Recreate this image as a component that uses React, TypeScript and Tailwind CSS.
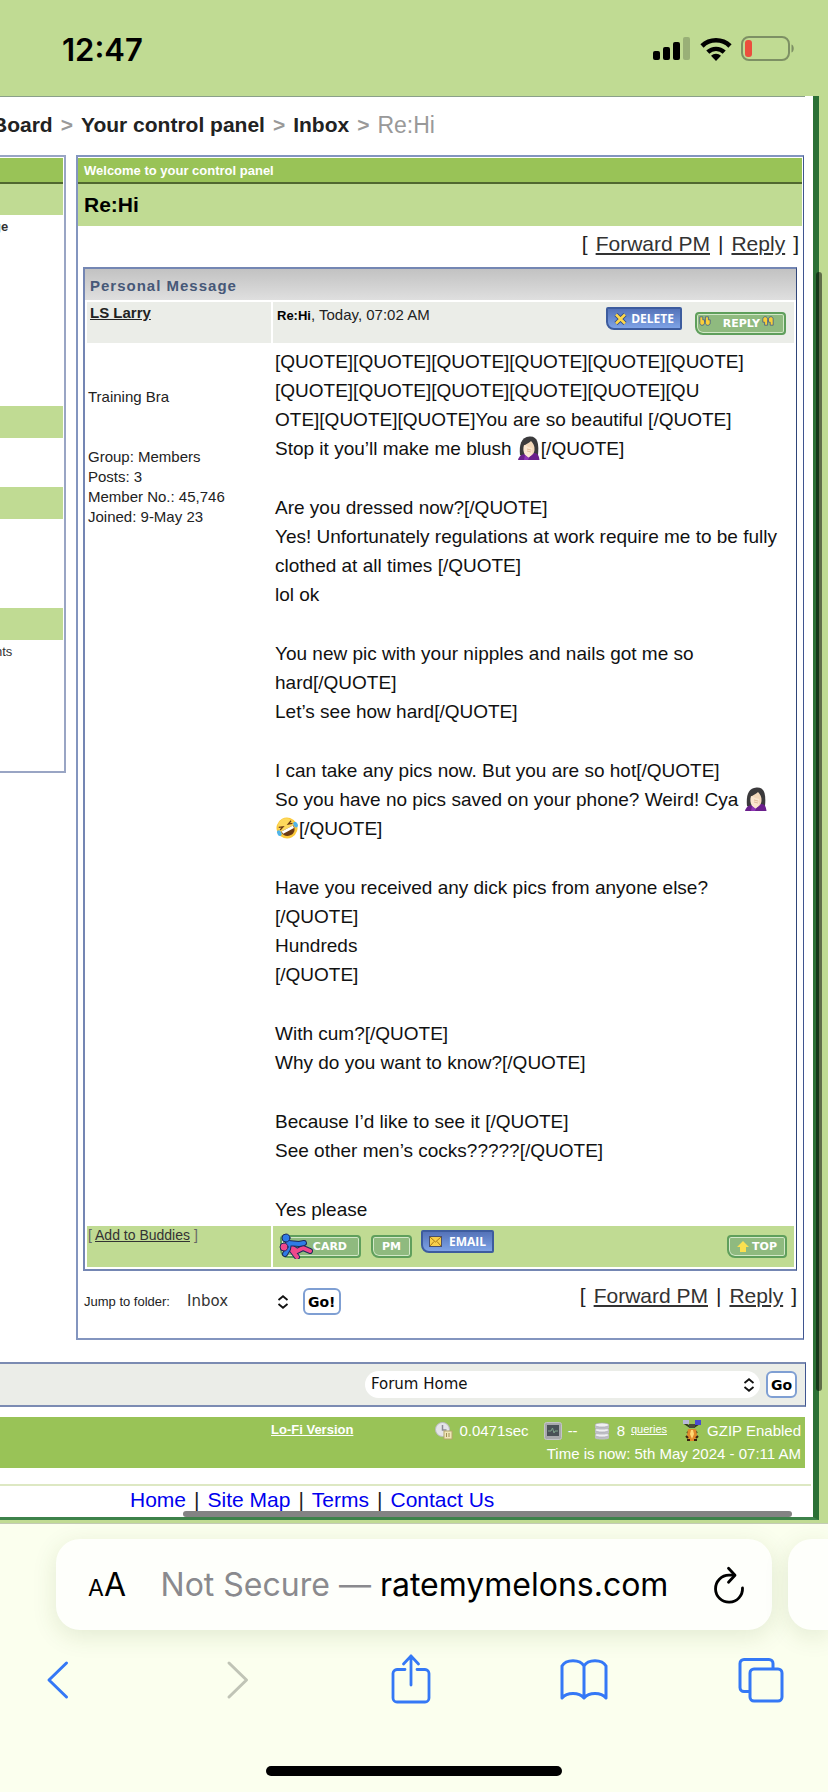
import type { ReactNode } from "react";
import clsx from "clsx";

type Part = string | { emoji: "facepalm" | "rofl" };

const FACEPALM: Part = { emoji: "facepalm" };
const ROFL: Part = { emoji: "rofl" };

const MESSAGE: Part[][][] = [
  [
    ["[QUOTE][QUOTE][QUOTE][QUOTE][QUOTE][QUOTE]"],
    ["[QUOTE][QUOTE][QUOTE][QUOTE][QUOTE][QU"],
    ["OTE][QUOTE][QUOTE]You are so beautiful [/QUOTE]"],
    ["Stop it you’ll make me blush ", FACEPALM, "[/QUOTE]"],
  ],
  [
    ["Are you dressed now?[/QUOTE]"],
    ["Yes! Unfortunately regulations at work require me to be fully"],
    ["clothed at all times [/QUOTE]"],
    ["lol ok"],
  ],
  [
    ["You new pic with your nipples and nails got me so"],
    ["hard[/QUOTE]"],
    ["Let’s see how hard[/QUOTE]"],
  ],
  [
    ["I can take any pics now. But you are so hot[/QUOTE]"],
    ["So you have no pics saved on your phone? Weird! Cya ", FACEPALM],
    [ROFL, "[/QUOTE]"],
  ],
  [
    ["Have you received any dick pics from anyone else?"],
    ["[/QUOTE]"],
    ["Hundreds"],
    ["[/QUOTE]"],
  ],
  [["With cum?[/QUOTE]"], ["Why do you want to know?[/QUOTE]"]],
  [["Because I’d like to see it [/QUOTE]"], ["See other men’s cocks?????[/QUOTE]"]],
  [["Yes please"]],
];

const FOOTER_LINKS = ["Home", "Site Map", "Terms", "Contact Us"];

function Facepalm() {
  return (
    <svg viewBox="0 0 24 24" className="inline-block size-6 align-[-5px]" role="img" aria-label="facepalm">
      <path d="M3 19C2 9 4 1 12.500 .5S22 8 21 19l-4 2H6z" fill="#3b3a3c" />
      <path d="M1 24c1-4 4-6 8-6l8-1c4 0 5 3 5.500 7z" fill="#6a1f8c" />
      <path d="M8 9c2-1 5-3 6-4 2 2 4 5 3.500 9-.5 4-3 6-5.500 6S7 16 7 13z" fill="#f3d8bb" />
      <path d="M7 9c2 0 3 1 4 2l4 1c1 1 0 2-1 2l1 2c0 3-2 5-4 6l-3-3C6 16 6 12 7 9z" fill="#fbe6cf" />
      <path d="M10 13l4 1M10 15l4 1" stroke="#d9b08c" strokeWidth=".8" />
      <path d="M7 24l1-5 4 3-1 2z" fill="#8f35b5" />
    </svg>
  );
}

function Rofl() {
  return (
    <svg viewBox="0 0 24 24" className="inline-block size-6 align-[-5px]" role="img" aria-label="rolling on the floor laughing">
      <g transform="rotate(-28 12 12)">
        <circle cx="12" cy="12" r="10.500" fill="#fbc93a" />
        <circle cx="12" cy="10" r="8" fill="#fdd95c" />
        <path d="M5 12.500h14c0 5-3 7.500-7 7.500s-7-2.500-7-7.500z" fill="#6b3a14" />
        <path d="M5.500 12.500h13l-.4 2.800H6z" fill="#fff" />
        <path d="M5 7.500l4 1.600-4 1.400M19 7.500l-4 1.600 4 1.400" fill="none" stroke="#6b3a14" strokeWidth="1.300" />
        <ellipse cx="2.800" cy="13" rx="2" ry="3" fill="#4fb4ea" />
        <ellipse cx="21.200" cy="13" rx="2" ry="3" fill="#4fb4ea" />
      </g>
    </svg>
  );
}

function MessageBody() {
  return (
    <div className="flex flex-col gap-[30px] text-[19px] leading-[29px] text-[#111]">
      {MESSAGE.map((lines, p) => (
        <p key={p}>
          {lines.map((parts, l) => (
            <span key={l} className="block h-[29px] whitespace-nowrap">
              {parts.map((part, i) => {
                if (typeof part === "string") return part;
                return part.emoji === "facepalm" ? <Facepalm key={i} /> : <Rofl key={i} />;
              })}
            </span>
          ))}
        </p>
      ))}
    </div>
  );
}

function PmLinks() {
  return (
    <div className="flex gap-2 text-[21px] leading-6 whitespace-nowrap text-[#222]">
      <span>[</span>
      <a href="#forward" className="text-[#333] underline">Forward PM</a>
      <span>|</span>
      <a href="#reply" className="text-[#333] underline">Reply</a>
      <span>]</span>
    </div>
  );
}

function BlueButton({ icon, children, className }: { icon: ReactNode; children: string; className: string }) {
  return (
    <button
      className={clsx(
        "flex h-[23px] items-center justify-between rounded-xs rounded-bl-lg border-2 border-[#3d5c9e] bg-linear-to-b from-[#5573b9] to-[#7ea3e6] pr-1.5 pl-1.5 font-['Open_Sans',sans-serif] text-[12px] leading-none font-bold text-white",
        className,
      )}
    >
      {icon}
      {children}
    </button>
  );
}

function GreenButton({ children, className }: { children: ReactNode; className: string }) {
  return (
    <button
      className={clsx(
        "relative flex h-[23px] items-center rounded-sm rounded-bl-lg border-2 border-[#5f9f5c] bg-[#8fba7f] font-['DejaVu_Sans',Verdana,sans-serif] text-[11px] leading-none font-bold text-white inset-ring inset-ring-[#d3e8c8]",
        className,
      )}
    >
      {children}
    </button>
  );
}

function Quotes({ closing = false }: { closing?: boolean }) {
  return (
    <svg viewBox="0 0 12 10" className="h-[10px] w-3" aria-hidden="true">
      <g transform={closing ? "rotate(180 6 5)" : undefined} stroke="#3c5a8c" strokeWidth=".8" fill="#f9cf3a">
        <path d="M.8 .8h3v3h1.700v3c0 1.600-1 2.500-2.500 2.500S.8 8 .8 6.500z" />
        <path d="M6.400 .8h3v3h1.800v3c0 1.600-1 2.500-2.500 2.500S6.400 8 6.400 6.500z" />
      </g>
    </svg>
  );
}

function UpDown() {
  return (
    <svg viewBox="0 0 12 14" className="pointer-events-none h-[14px] w-3" fill="none" stroke="#111" strokeWidth="1.800" aria-hidden="true">
      <path d="M1.500 5L6 1.200 10.500 5M1.500 9L6 12.800 10.500 9" />
    </svg>
  );
}

function GoButton({ children }: { children: string }) {
  return (
    <button className="h-[27px] rounded-md border-2 border-[#7f9fd3] bg-white px-[3px] font-['DejaVu_Sans',Verdana,sans-serif] text-[14px] leading-none font-bold text-black">
      {children}
    </button>
  );
}

function StatusBar() {
  return (
    <header className="flex h-24 shrink-0 items-center justify-between bg-[#c0db93] pt-[2px] pr-[33px] pl-[62px] font-['Inter',sans-serif]">
      <span className="text-[31px] leading-none font-semibold text-black">12:47</span>
      <div className="flex items-center gap-[9px]">
        <svg viewBox="0 0 38 24" className="h-6 w-[38px]" aria-label="Signal">
          <rect x="0" y="14" width="7" height="9" rx="2" />
          <rect x="10" y="10" width="7" height="13" rx="2" />
          <rect x="20" y="5" width="7" height="18" rx="2" />
          <rect x="30" y="0" width="7" height="23" rx="2" fill="#99b077" />
        </svg>
        <svg viewBox="0 0 32 24" className="h-6 w-8" aria-label="Wi-Fi">
          <path d="M16 24l-5-5.200a7.200 7.200 0 0 1 10 0z" />
          <path d="M7.800 15.200a11.800 11.800 0 0 1 16.400 0" fill="none" stroke="#000" strokeWidth="4.400" />
          <path d="M2 9a20 20 0 0 1 28 0" fill="none" stroke="#000" strokeWidth="4.600" />
        </svg>
        <svg viewBox="0 0 54 26" className="h-[26px] w-[54px]" aria-label="Battery">
          <rect x="1" y="1" width="47" height="23" rx="7" fill="none" stroke="#7d9064" strokeWidth="2" />
          <rect x="4" y="4" width="7" height="17" rx="3" fill="#eb4e3d" />
          <path d="M50.500 8.500c3 .8 3 7.200 0 8z" fill="#7d9064" />
        </svg>
      </div>
    </header>
  );
}

function Breadcrumb() {
  return (
    <nav className="-ml-[8px] flex h-[58px] items-center gap-2 pb-[2px] text-[21px] leading-6 font-bold whitespace-nowrap text-[#222]">
      <a href="#board">Board</a>
      <span className="text-[#999]">&gt;</span>
      <a href="#panel">Your control panel</a>
      <span className="text-[#999]">&gt;</span>
      <a href="#inbox">Inbox</a>
      <span className="text-[#999]">&gt;</span>
      <span className="text-[23px] font-normal text-[#999]">Re:Hi</span>
    </nav>
  );
}

function SideMenu() {
  return (
    <aside className="w-[66px] shrink-0 self-start border-2 border-l-0 border-[#99a5c4] pt-px pr-px pb-[111px] text-[13px] leading-4 text-[#333]">
      <div className="h-[26px] border-b-2 border-[#50682f] bg-[#99c357]" />
      <div className="h-[31px] bg-[#c0db93]" />
      <div className="flex h-[191px] pt-1">
        <span className="-ml-[7px] font-bold">ge</span>
      </div>
      <div className="h-8 bg-[#c0db93]" />
      <div className="h-[49px]" />
      <div className="h-8 bg-[#c0db93]" />
      <div className="h-[89px]" />
      <div className="h-8 bg-[#c0db93]" />
      <div className="-ml-[5px] pt-1">nts</div>
    </aside>
  );
}

function MessageTable() {
  return (
    <section className="mr-[6px] ml-[5px] border-2 border-r border-[#7486b3] border-r-[#2f4579]">
      <h2 className="h-[31px] bg-linear-to-b from-[#c2c2c2] to-[#dfdfdf] pl-[5px] text-[15px] leading-[33px] font-bold tracking-[1px] text-[#465878]">
        Personal Message
      </h2>
      <table className="w-full table-fixed border-separate border-spacing-[2px] text-[15px] leading-5 text-[#222]">
        <colgroup>
          <col className="w-[184px]" />
          <col />
        </colgroup>
        <tbody>
          <tr className="h-[41px] align-top">
            <td className="bg-[#ebede8] pt-px pl-[3px]">
              <a href="#larry" className="font-bold underline">LS Larry</a>
            </td>
            <td className="bg-[#ebede8] pr-2 pl-1">
              <div className="flex items-start justify-between">
                <div className="pt-[3px]">
                  <b className="text-[13px] text-black">Re:Hi</b>, Today, 07:02 AM
                </div>
                <div className="flex gap-[13px] pt-[5px]">
                  <BlueButton
                    className="w-[76px]"
                    icon={
                      <svg viewBox="0 0 13 12" className="h-3 w-[13px]" aria-hidden="true">
                        <path d="M2 1.500l9 9M11 1.500l-9 9" stroke="#2f4a86" strokeWidth="4.400" />
                        <path d="M2 1.500l9 9M11 1.500l-9 9" stroke="#ffd84a" strokeWidth="2.600" />
                      </svg>
                    }
                  >
                    DELETE
                  </BlueButton>
                  <GreenButton className="mt-[5px] w-[91px] justify-between pr-[10px] pl-[2px]">
                    <span className="mb-1.5"><Quotes /></span>
                    <span className="flex items-center gap-[2px]">
                      REPLY
                      <span className="mb-1.5"><Quotes closing /></span>
                    </span>
                  </GreenButton>
                </div>
              </div>
            </td>
          </tr>
          <tr className="align-top">
            <td className="px-px pt-[42px]">
              <p>Training Bra</p>
              <p className="mt-10">Group: Members</p>
              <p>Posts: 3</p>
              <p>Member No.: 45,746</p>
              <p>Joined: 9-May 23</p>
            </td>
            <td className="pt-[2px] pl-[2px]">
              <MessageBody />
            </td>
          </tr>
          <tr className="h-[41px] align-top">
            <td className="bg-[#c0db93] pl-px text-[14px] leading-[18px]">
              <span className="text-[#666]">[</span>{" "}
              <a href="#buddies" className="text-[#333] underline">Add to Buddies</a>{" "}
              <span className="text-[#666]">]</span>
            </td>
            <td className="bg-[#c0db93] pr-[7px] pl-[7px]">
              <div className="flex items-start pt-1">
                <GreenButton className="mt-[5px] w-[81px] justify-end pr-3">
                  <svg
                    viewBox="0 0 34 26"
                    className="absolute -top-[4px] -left-[3px] h-[26px] w-[34px]"
                    fill="none"
                    strokeLinecap="round"
                    strokeLinejoin="round"
                    aria-hidden="true"
                  >
                    <path d="M4 15l8-1 6 4 6-3 7 3M12 16l3 4 3 4" stroke="#1c2a5c" strokeWidth="6" />
                    <path d="M4 15l8-1 6 4 6-3 7 3M12 16l3 4 3 4" stroke="#f0488c" strokeWidth="4" />
                    <path d="M9 10l11 1 5-1M10 10l-1 6-3 5" stroke="#1c2a5c" strokeWidth="6" />
                    <path d="M9 10l11 1 5-1M10 10l-1 6-3 5" stroke="#2f7be6" strokeWidth="4" />
                    <circle cx="7" cy="5" r="4" fill="#2f7be6" stroke="#1c2a5c" />
                    <circle cx="5" cy="14" r="4" fill="#f0488c" stroke="#1c2a5c" />
                  </svg>
                  CARD
                </GreenButton>
                <GreenButton className="mt-[5px] ml-[10px] w-[41px] justify-center">PM</GreenButton>
                <BlueButton
                  className="ml-[9px] w-[73px]"
                  icon={
                    <svg viewBox="0 0 13 11" className="h-[11px] w-[13px]" aria-hidden="true">
                      <rect x=".5" y=".5" width="12" height="10" fill="#f8cf4b" stroke="#4a4f6b" />
                      <path d="M1 1l5.500 5L12 1M1 10l4-4.500M12 10L8 5.500" fill="none" stroke="#a87918" />
                    </svg>
                  }
                >
                  EMAIL
                </BlueButton>
                <GreenButton className="mt-[5px] ml-auto w-[60px] justify-between pr-2 pl-2">
                  <svg viewBox="0 0 12 12" className="size-3" aria-hidden="true">
                    <path d="M6 0l6 6H9v5H3V6H0z" fill="#fbe14f" />
                  </svg>
                  TOP
                </GreenButton>
              </div>
            </td>
          </tr>
        </tbody>
      </table>
    </section>
  );
}

function MainPanel() {
  return (
    <main className="min-w-0 flex-1 border-2 border-r border-[#8395bf] border-r-[#3f5590] pt-px">
      <h2 className="mr-px h-[26px] border-b-2 border-[#50682f] bg-[#99c357] pl-[6px] text-[13px] leading-[26px] font-bold text-white">
        Welcome to your control panel
      </h2>
      <h1 className="mr-px h-[42px] bg-[#c0db93] pl-[6px] text-[21px] leading-[41px] font-bold text-black">Re:Hi</h1>
      <div className="flex h-[41px] justify-end pt-[6px] pr-1">
        <PmLinks />
      </div>
      <MessageTable />
      <div className="flex h-[67px] items-start justify-between pr-[6px] pl-[6px]">
        <div className="mt-[17px] flex h-[27px] items-center">
          <label htmlFor="folder" className="text-[13px] text-[#222]">Jump to folder:</label>
          <div className="relative ml-[15px] flex w-[104px] items-center justify-end">
            <select
              id="folder"
              className="absolute inset-x-0 h-[27px] w-full appearance-none bg-transparent pl-[2px] font-['DejaVu_Sans',Verdana,sans-serif] text-[15px] text-[#333]"
            >
              <option>Inbox</option>
            </select>
            <UpDown />
          </div>
          <div className="ml-[14px]">
            <GoButton>Go!</GoButton>
          </div>
        </div>
        <div className="pt-[13px]">
          <PmLinks />
        </div>
      </div>
    </main>
  );
}

function ForumJump() {
  return (
    <div className="mt-[22px] mr-[7px] flex h-[45px] items-center justify-end gap-[6px] border-2 border-r border-l-0 border-[#7b8bb2] border-r-[#3f5590] bg-[#ebede8] pr-2">
      <div className="relative flex w-[395px] items-center justify-end pr-[5px]">
        <select
          aria-label="Forum jump"
          className="absolute inset-x-0 h-[27px] w-full appearance-none rounded-full bg-white pl-[6px] font-['DejaVu_Sans',Verdana,sans-serif] text-[15px] text-[#111]"
        >
          <option>Forum Home</option>
        </select>
        <span className="relative">
          <UpDown />
        </span>
      </div>
      <GoButton>Go</GoButton>
    </div>
  );
}

function StatsBar() {
  return (
    <div className="mt-[10px] mr-2 flex h-[51px] justify-end bg-[#99c357] pt-[2px] pr-[4px] text-[15px] text-white">
      <a href="#lofi" className="mr-[82px] pt-px text-[13px] leading-5 font-bold underline">Lo-Fi Version</a>
      <div className="text-right leading-[23px]">
        <div className="flex items-center justify-end">
          <svg viewBox="0 0 18 18" className="mr-[6px] size-[18px]" aria-hidden="true">
            <circle cx="7.500" cy="7.500" r="7" fill="#e4e4e8" stroke="#b9b9c0" />
            <path d="M7.500 3v5h4" fill="none" stroke="#8a8a94" strokeWidth="1.500" />
            <rect x="9" y="9" width="8" height="8" fill="#efe6b8" stroke="#b5a66c" />
            <path d="M11.500 11v4M14 11v4" stroke="#a08e55" />
          </svg>
          0.0471sec
          <svg viewBox="0 0 18 18" className="mr-[6px] ml-[15px] size-[18px]" aria-hidden="true">
            <rect x=".5" y=".5" width="17" height="17" rx="2" fill="#a8a8ac" stroke="#c5c5c8" />
            <rect x="3" y="3" width="12" height="11" fill="#4a5157" />
            <path d="M4 9h3l1.500-3L10 11l1-2h3" fill="none" stroke="#7fa18b" />
          </svg>
          --
          <svg viewBox="0 0 16 18" className="mr-[7px] ml-4 h-[18px] w-4" aria-hidden="true">
            {[12, 7, 2].map((y) => (
              <g key={y}>
                <path d={`M1 ${y + 1}v3c0 2 14 2 14 0v-3z`} fill="#bdbdc4" />
                <ellipse cx="8" cy={y + 1} rx="7" ry="2" fill="#f0f0f3" stroke="#a6a6ae" strokeWidth=".6" />
              </g>
            ))}
          </svg>
          8
          <a href="#queries" className="mb-1 ml-[6px] text-[11px] leading-4 underline">queries</a>
          <svg viewBox="0 0 18 22" className="mr-[6px] ml-4 h-[22px] w-[18px]" aria-hidden="true">
            <path d="M1 3l6 4M17 3l-6 4M4 13l4-3M14 13l-3-3" stroke="#2f3a20" strokeWidth="2" />
            <rect x="0" y="0" width="6" height="4" fill="#b9b9d8" />
            <rect x="12" y="0" width="6" height="5" fill="#4a4ad0" />
            <path d="M6 4h6v4H6z" fill="#4a4a3a" />
            <path d="M5 9h8l1 6-2 6H6l-2-6z" fill="#e0892a" />
            <path d="M8 10h2l1 4-2 5-2-5z" fill="#ffd873" />
            <path d="M4 20h3M11 20h3M3 16l2 2M15 16l-2 2" stroke="#3a1f10" strokeWidth="2" />
          </svg>
          GZIP Enabled
        </div>
        <div>Time is now: 5th May 2024 - 07:11 AM</div>
      </div>
    </div>
  );
}

function WebPage() {
  return (
    <div className="relative bg-[#c0db93] pr-[9px] pb-[3px]">
      <div className="overflow-hidden border-r-6 border-b-3 border-[#2b7035] border-b-[#3d824a] bg-white">
        <div className="mr-2 h-px bg-[#8aa08a]" />
        <Breadcrumb />
        <div className="flex items-stretch gap-[10px] pr-[9px]">
          <SideMenu />
          <MainPanel />
        </div>
        <ForumJump />
        <StatsBar />
        <footer className="mt-4 mr-[2px] flex h-[33px] gap-2 border-t-2 border-[#dde8c3] pt-[2px] pl-[130px] text-[21px] leading-6 whitespace-nowrap text-[#222]">
          {FOOTER_LINKS.map((label, i) => (
            <span key={label} className="flex gap-2">
              {i > 0 && <span>|</span>}
              <a href={`#${label}`} className="text-[#0000ee]">{label}</a>
            </span>
          ))}
        </footer>
      </div>
      {/* overlay scroll indicators */}
      <div className="absolute top-[176px] right-[6px] bottom-[132px] w-[6px] rounded-full bg-black/50" />
      <div className="absolute right-9 bottom-[6px] left-[183px] h-[6px] rounded-full bg-[#838383]" />
    </div>
  );
}

function BrowserBar() {
  return (
    <div className="flex flex-1 flex-col overflow-hidden border-t border-[#c3cbb4] bg-[#fbffee] font-['Inter',sans-serif]">
      <div className="flex gap-4 pt-[15px] pl-14">
        <div className="flex h-[91px] flex-1 items-center rounded-3xl bg-[#fefffb] pr-[27px] pl-8 shadow-[0_6px_24px_rgba(60,90,20,0.13)]">
          <button aria-label="Page settings" className="flex items-baseline leading-none text-black">
            <span className="text-[23px]">A</span>
            <span className="text-[32px]">A</span>
          </button>
          <a href="#address" className="mr-[10px] flex-1 text-center text-[32px] leading-10 whitespace-nowrap text-black">
            <span className="text-[#8a8a8e]">Not Secure — </span>
            ratemymelons.com
          </a>
          <button aria-label="Reload">
            <svg viewBox="0 0 32 38" className="h-[38px] w-8" fill="none" stroke="#000" strokeWidth="2.800" strokeLinecap="round" strokeLinejoin="round">
              <path d="M21 9.200H16A13.500 13.500 0 1 0 29.500 22" />
              <path d="M15.500 2.200l6.500 7-6.500 7" />
            </svg>
          </button>
        </div>
        <div className="w-10 shrink-0 rounded-l-3xl bg-[#fefffb] shadow-[0_6px_24px_rgba(60,90,20,0.13)]" />
      </div>
      <nav className="mt-[22px] flex items-center justify-between pr-11 pl-[46px] text-[#3478f6]">
        <button aria-label="Back">
          <svg viewBox="0 0 24 54" className="h-[54px] w-6" fill="none" stroke="currentColor" strokeWidth="3" strokeLinecap="round" strokeLinejoin="round">
            <path d="M20.500 11L3 28l17.500 17" />
          </svg>
        </button>
        <button aria-label="Forward" disabled className="ml-[26px] text-[#c0c4b6]">
          <svg viewBox="0 0 24 54" className="h-[54px] w-6" fill="none" stroke="currentColor" strokeWidth="3" strokeLinecap="round" strokeLinejoin="round">
            <path d="M3 11l17.500 17L3 45" />
          </svg>
        </button>
        <button aria-label="Share" className="ml-[11px]">
          <svg viewBox="0 0 40 54" className="h-[54px] w-10" fill="none" stroke="currentColor" strokeWidth="2.800" strokeLinecap="round" strokeLinejoin="round">
            <path d="M14 17.500H6a4 4 0 0 0-4 4V46a4 4 0 0 0 4 4h28a4 4 0 0 0 4-4V21.500a4 4 0 0 0-4-4h-8" />
            <path d="M20 33V4M12.500 12L20 4l7.500 8" />
          </svg>
        </button>
        <button aria-label="Bookmarks">
          <svg viewBox="0 0 48 54" className="h-[54px] w-12" fill="none" stroke="currentColor" strokeWidth="3" strokeLinejoin="round">
            <path d="M24 14C20 7 6 7 2 14v32c5-6 17-6 22 0 5-6 17-6 22 0V14c-4-7-18-7-22 0zM24 14v32" />
          </svg>
        </button>
        <button aria-label="Tabs">
          <svg viewBox="0 0 46 54" className="h-[54px] w-[46px]" fill="none" stroke="currentColor" strokeWidth="3">
            <rect x="12" y="17" width="32" height="32" rx="4" />
            <path d="M12 39.500H6a4 4 0 0 1-4-4V11.500a4 4 0 0 1 4-4h25a4 4 0 0 1 4 4V17" />
          </svg>
        </button>
      </nav>
      <div className="mx-auto mt-[60px] mb-4 h-[10px] w-[296px] rounded-full bg-black" />
    </div>
  );
}

export default function App() {
  return (
    <div className="flex min-h-screen flex-col overflow-hidden bg-white font-['Liberation_Sans',Arial,sans-serif]">
      <StatusBar />
      <WebPage />
      <BrowserBar />
    </div>
  );
}
